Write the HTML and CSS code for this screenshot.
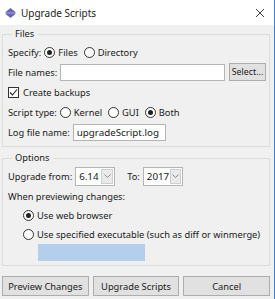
FILE: index.html
```html
<!DOCTYPE html>
<html lang="en">
<head>
    <meta charset="UTF-8" />
    <title>Upgrade Scripts</title>
    <link rel="stylesheet" href="styles.css">
</head>
<body>

<div class="window">
    <!-- title bar -->
    <div class="titlebar">
        <svg class="app-icon" width="11" height="10" viewBox="0 0 11 10">
            <polygon points="5.5,0 10.5,4 0.5,4" fill="#6b63b5"/>
            <rect x="0.5" y="4" width="10" height="2" fill="#8a84c9"/>
            <polygon points="0.5,6 10.5,6 5.5,10" fill="#6b63b5"/>
        </svg>
        <span class="title">Upgrade Scripts</span>
        <svg class="close" width="10" height="10" viewBox="0 0 10 10">
            <path d="M1 1 L9 9 M9 1 L1 9" stroke="#444" stroke-width="1" fill="none"/>
        </svg>
    </div>

    <div class="content">
        <fieldset class="group files">
            <legend>Files</legend>

            <div class="row">
                <span class="label">Specify:</span>
                <span class="radio on"></span><span class="opt">Files</span>
                <span class="radio"></span><span class="opt">Directory</span>
            </div>

            <div class="row">
                <span class="label">File names:</span>
                <span class="input wide"></span>
                <span class="btn small">Select...</span>
            </div>

            <div class="row">
                <span class="check">
                    <svg width="9" height="9" viewBox="0 0 9 9"><path d="M1 4.5 L3.5 7 L8 1.5" stroke="#222" stroke-width="1.1" fill="none"/></svg>
                </span>
                <span class="opt">Create backups</span>
            </div>

            <div class="row">
                <span class="label">Script type:</span>
                <span class="radio"></span><span class="opt">Kernel</span>
                <span class="radio"></span><span class="opt">GUI</span>
                <span class="radio on"></span><span class="opt">Both</span>
            </div>

            <div class="row">
                <span class="label">Log file name:</span>
                <span class="input log">upgradeScript.log</span>
            </div>
        </fieldset>

        <fieldset class="group options">
            <legend>Options</legend>

            <div class="row">
                <span class="label">Upgrade from:</span>
                <span class="combo"><span class="val">6.14</span><span class="arrow"><svg width="7" height="4" viewBox="0 0 7 4"><path d="M0.5 0.5 L3.5 3.5 L6.5 0.5" stroke="#888" fill="none"/></svg></span></span>
                <span class="label to">To:</span>
                <span class="combo"><span class="val">2017</span><span class="arrow"><svg width="7" height="4" viewBox="0 0 7 4"><path d="M0.5 0.5 L3.5 3.5 L6.5 0.5" stroke="#888" fill="none"/></svg></span></span>
            </div>

            <div class="row">When previewing changes:</div>

            <div class="row sub">
                <span class="radio on"></span><span class="opt">Use web browser</span>
            </div>
            <div class="row sub">
                <span class="radio"></span><span class="opt">Use specified executable (such as diff or winmerge)</span>
            </div>
            <div class="exe-field"></div>
        </fieldset>

        <div class="buttons">
            <span class="btn">Preview Changes</span>
            <span class="btn">Upgrade Scripts</span>
            <span class="btn">Cancel</span>
        </div>
    </div>
</div>

</body>
</html>
```

FILE: styles.css
```css
body {
    margin: 0;
    font-family: "Noto Sans", "Open Sans", sans-serif;
    font-size: 9.3px;
    color: #1a1a1a;
    background: #fff;
}
.window {
    width: 274px;
    height: 299px;
    border-right: 1px solid #3c7fd1;
    background: #f0f0f0;
}

/* title bar */
.titlebar {
    height: 25px;
    background: #fff;
    display: flex;
    align-items: center;
    padding-left: 5px;
}
.app-icon {
    margin-right: 5px;
}
.title {
    font-size: 10px;
    color: #222;
}
.close {
    margin-left: auto;
    margin-right: 9px;
}

.content {
    padding: 0 4px 0 2px;
}

/* groups */
.group {
    border: 1px solid #dcdcdc;
    margin: 2px 0 0 0;
    padding: 1px 3px 4px 5px;
}
.group legend {
    padding: 0 3px;
    margin-left: 4px;
    line-height: 14px;
}
.options {
    margin-top: 4px;
}
.row {
    display: flex;
    align-items: center;
    height: 20px;
    white-space: nowrap;
}
.row.sub {
    height: 19px;
    padding-left: 15px;
}
.label {
    margin-right: 3px;
}
.label.to {
    margin-left: 12px;
}
.opt {
    margin-right: 6px;
}

/* radios & checkbox */
.radio {
    width: 9px;
    height: 9px;
    border: 1px solid #333;
    border-radius: 50%;
    background: #fff;
    margin-right: 3px;
    position: relative;
    flex: none;
}
.radio.on::after {
    content: "";
    position: absolute;
    left: 2px;
    top: 2px;
    width: 5px;
    height: 5px;
    border-radius: 50%;
    background: #222;
}
.check {
    width: 9px;
    height: 9px;
    border: 1px solid #333;
    background: #fff;
    margin-right: 4px;
    display: flex;
    align-items: center;
    justify-content: center;
}

/* inputs */
.input {
    height: 15px;
    border: 1px solid #b4b4b4;
    background: #fff;
    line-height: 15px;
    padding: 0 3px;
    font-size: 9.8px;
}
.input.wide {
    flex: 1;
    margin-right: 4px;
}
.input.log {
    width: 85px;
}
.combo {
    display: flex;
    height: 17px;
    width: 38px;
    border: 1px solid #b4b4b4;
    background: #fff;
    font-size: 9.8px;
}
.combo .val {
    flex: 1;
    line-height: 17px;
    padding-left: 3px;
}
.combo .arrow {
    width: 10px;
    margin: 1px;
    background: #eaeaea;
    border: 1px solid #cfcfcf;
    display: flex;
    align-items: center;
    justify-content: center;
}

.exe-field {
    height: 17px;
    width: 107px;
    margin: 0 0 0 30px;
    background: #b4cfec;
}

/* buttons */
.btn {
    display: flex;
    align-items: center;
    justify-content: center;
    border: 1px solid #adadad;
    background: #e1e1e1;
}
.btn.small {
    width: 35px;
    height: 16px;
    font-size: 8.8px;
}
.buttons {
    display: flex;
    gap: 4px;
    margin-top: 10px;
}
.buttons .btn {
    flex: 1;
    height: 18px;
}
```
